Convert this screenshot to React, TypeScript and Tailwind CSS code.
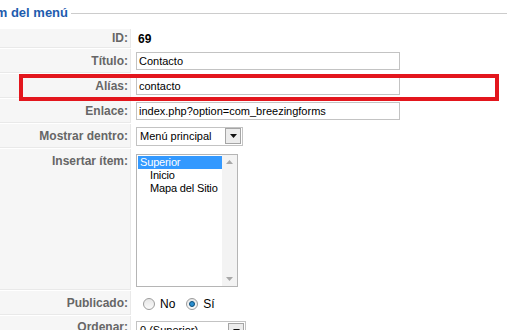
import React from 'react'

function Label({ children, top }: { children: React.ReactNode; top?: boolean }) {
  return (
    <div
      className={`w-[131px] shrink-0 border-r border-b border-[#e9e9e9] bg-[#f6f6f6] pr-[2px] text-right text-[12px] font-bold text-[#666] ${
        top ? 'pt-[5px] leading-[14px]' : 'flex items-center justify-end'
      }`}
    >
      {children}
    </div>
  )
}

function TextInput({ value }: { value: string }) {
  return (
    <div className="flex h-[18px] w-[264px] items-center border border-[#c3c3c3] bg-white pl-[2px] text-[11px] text-black">
      {value}
    </div>
  )
}

function DropButton() {
  return (
    <div className="flex h-[16px] w-[16px] items-center justify-center border border-[#a5a5a5] bg-[#ececec]">
      <svg width="7" height="4" viewBox="0 0 7 4">
        <path d="M0 0h7L3.5 4z" fill="#111" />
      </svg>
    </div>
  )
}

function Radio({ checked }: { checked?: boolean }) {
  return (
    <div className="flex h-[12px] w-[12px] items-center justify-center rounded-full border border-[#9c9c9c] bg-gradient-to-b from-[#e6e6e6] to-[#fafafa]">
      {checked && <div className="h-[6px] w-[6px] rounded-full border border-[#0d4f7a] bg-[#2b8fd0]" />}
    </div>
  )
}

export default function App() {
  return (
    <div
      className="relative h-[330px] w-[507px] overflow-hidden bg-white"
      style={{ fontFamily: '"Liberation Sans", Arial, sans-serif' }}
    >
      <div className="flex h-[26px] items-center">
        <div className="flex w-[68px] justify-end overflow-hidden whitespace-nowrap text-[13px] font-bold text-[#1d5cae]">
          Detalles del ítem del menú
        </div>
        <div className="ml-[3px] flex-1 border-t border-[#cccccc]" />
      </div>

      <div className="mt-[3px] flex flex-col gap-px">
        <div className="flex h-[19px]">
          <Label>ID:</Label>
          <div className="flex items-center pl-[7px] text-[12px] font-bold text-black">69</div>
        </div>

        <div className="flex h-[24px]">
          <Label>Título:</Label>
          <div className="flex items-center pl-[5px]">
            <TextInput value="Contacto" />
          </div>
        </div>

        <div className="flex h-[24px]">
          <Label>Alías:</Label>
          <div className="flex items-center pl-[5px]">
            <TextInput value="contacto" />
          </div>
        </div>

        <div className="flex h-[24px]">
          <Label>Enlace:</Label>
          <div className="flex items-center pl-[5px]">
            <TextInput value="index.php?option=com_breezingforms" />
          </div>
        </div>

        <div className="flex h-[24px]">
          <Label>Mostrar dentro:</Label>
          <div className="flex items-center pl-[5px]">
            <div className="flex h-[19px] w-[107px] items-center justify-between border border-[#c3c3c3] bg-white pl-[3px] pr-[1px] text-[11px] text-black">
              <span>Menú principal</span>
              <DropButton />
            </div>
          </div>
        </div>

        <div className="flex h-[141px]">
          <Label top>Insertar ítem:</Label>
          <div className="pl-[5px] pt-[5px]">
            <div className="flex h-[133px] w-[102px] border border-[#b5b5b5] bg-white">
              <div className="flex-1 overflow-hidden whitespace-nowrap pl-px pt-px text-[11px] leading-[13px] tracking-[-0.15px] text-black">
                <div className="bg-[#3399ff] pl-[2px] text-white">Superior</div>
                <div className="pl-[12px]">Inicio</div>
                <div className="pl-[12px]">Mapa del Sitio</div>
              </div>
              <div className="flex w-[15px] flex-col items-center justify-between bg-[#f3f3f3] py-[5px]">
                <svg width="7" height="4" viewBox="0 0 7 4">
                  <path d="M0 4h7L3.5 0z" fill="#a8a8a8" />
                </svg>
                <svg width="7" height="4" viewBox="0 0 7 4">
                  <path d="M0 0h7L3.5 4z" fill="#a8a8a8" />
                </svg>
              </div>
            </div>
          </div>
        </div>

        <div className="flex h-[24px]">
          <Label>Publicado:</Label>
          <div className="flex items-center gap-[5px] pl-[12px] pt-[2px] text-[12px] text-black">
            <Radio />
            <span className="mr-[6px]">No</span>
            <Radio checked />
            <span>Sí</span>
          </div>
        </div>

        <div className="flex h-[24px]">
          <div className="w-[131px] shrink-0 border-r border-[#e9e9e9] bg-[#f6f6f6] pr-[2px] pt-[4px] text-right text-[12px] font-bold leading-[14px] text-[#666]">
            Ordenar:
          </div>
          <div className="pl-[5px] pt-[5px]">
            <div className="flex h-[19px] w-[110px] items-center justify-between border border-[#c3c3c3] bg-white pl-[3px] pr-[1px] text-[11px] text-black">
              <span>0 (Superior)</span>
              <DropButton />
            </div>
          </div>
        </div>
      </div>

      <div className="absolute left-[19px] top-[74px] h-[27px] w-[480px] border-4 border-[#e3161d]" />
    </div>
  )
}
